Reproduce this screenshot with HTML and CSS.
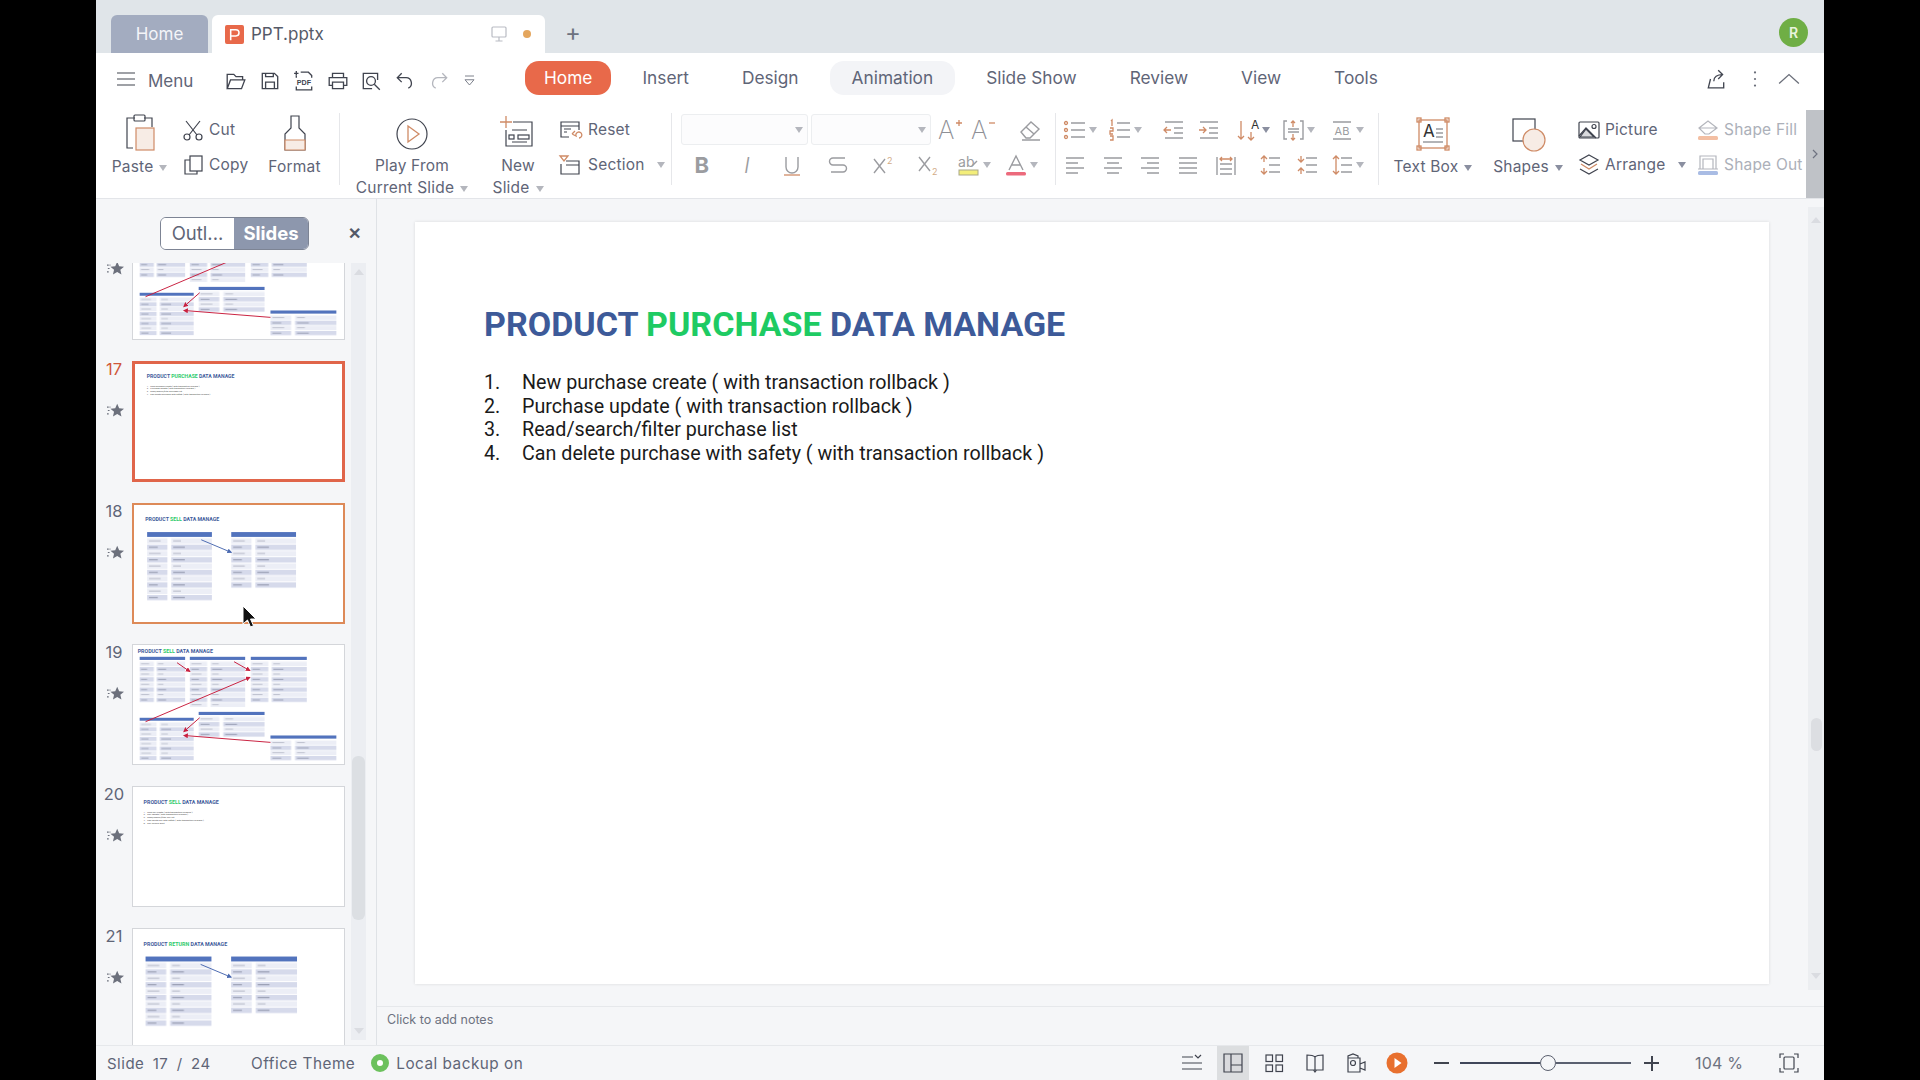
FILE: index.html
```html
<!DOCTYPE html>
<html lang="en">
<head>
  <meta charset="UTF-8" />
  <title>PPT.pptx</title>
  <link rel="stylesheet" href="styles.css">
</head>
<body>
<div class="app">

  <div class="titlebar">
    <div class="tab tab-home">Home</div>
    <div class="tab tab-file">
      <svg class="file-icon" viewBox="0 0 20 20"><rect width="20" height="20" rx="2" fill="#e8694a"/><path d="M6 16V5h5.5a3 3 0 0 1 0 6.500H6" fill="none" stroke="#fff" stroke-width="1.600"/></svg>
      <span>PPT.pptx</span>
      <svg class="ic tab-screen" viewBox="0 0 20 20"><rect x="3" y="3" width="14" height="10" rx="1" class="faint"/><path d="M10 13v4M6.500 17h7" class="faint"/></svg>
      <i class="tab-dot"></i>
    </div>
    <div class="tab-plus">+</div>
    <div class="avatar">R</div>
  </div>

  <div class="menubar">
    <svg class="ic burger" viewBox="0 0 20 20"><path d="M1 4h18M1 10h18M1 16h18"/></svg>
    <span class="menu-label">Menu</span>
    <div class="quick">
      <svg class="ic" viewBox="0 0 20 20"><path d="M2 17V4h6l2 2h6v3M2 17l3-8h13l-3 8z"/></svg>
      <svg class="ic" viewBox="0 0 20 20"><path d="M3 3h11l3 3v11H3zM6 17v-6h8v6M6 3v3h7V3"/></svg>
      <svg class="ic" viewBox="0 0 20 20"><path d="M7 2h7l3 3v2M3 7V5M1 3h4M3 15v3h14v-3"/><path d="M3 1v4"/><text x="10" y="13.500" class="ic-pdf">PDF</text></svg>
      <svg class="ic" viewBox="0 0 20 20"><path d="M5 7V3h10v4M5 14H2V7h16v7h-3M5 11h10v6H5z"/></svg>
      <svg class="ic" viewBox="0 0 20 20"><path d="M16 9V3H3v14h8"/><circle cx="10" cy="10" r="4"/><path d="M13 13l5 5"/></svg>
      <svg class="ic" viewBox="0 0 20 20"><path d="M7 3L3 7l4 4M3 7h8a5 5 0 0 1 2 9.500"/></svg>
      <svg class="ic off" viewBox="0 0 20 20"><path d="M13 3l4 4-4 4M17 7H9a5 5 0 0 0-2 9.500"/></svg>
      <svg class="ic small" viewBox="0 0 20 20"><path d="M4 4h12M4 9h12l-6 7z"/></svg>
    </div>
    <div class="tabs">
      <span class="rtab rtab-on">Home</span>
      <span class="rtab">Insert</span>
      <span class="rtab">Design</span>
      <span class="rtab rtab-hover">Animation</span>
      <span class="rtab">Slide Show</span>
      <span class="rtab">Review</span>
      <span class="rtab">View</span>
      <span class="rtab">Tools</span>
    </div>
    <div class="menu-right">
      <svg class="ic" viewBox="0 0 20 20"><path d="M5 10l-2 8h14v-5M8 12c0-4 3-6 8-6M12 2l4 4-4 4"/></svg>
      <svg class="ic" viewBox="0 0 20 20"><circle cx="10" cy="4" r="1" class="solid"/><circle cx="10" cy="10" r="1" class="solid"/><circle cx="10" cy="16" r="1" class="solid"/></svg>
      <svg class="ic" viewBox="0 0 20 20"><path d="M1 14l9-8 9 8" class="faint-dark"/></svg>
    </div>
  </div>

  <div class="ribbon">
    <div class="big w-paste">
      <svg class="ic lg" viewBox="0 0 36 44"><path d="M22 6h8v9M11 36H5V6h8"/><rect x="12" y="3" width="11" height="6" rx="1"/><rect x="14" y="16" width="18" height="22" class="tint"/></svg>
      <div class="lbl">Paste<i class="caret"></i></div>
    </div>
    <div class="stack w-clip">
      <div class="row">
        <svg class="ic" viewBox="0 0 22 22"><path d="M4 2l11 14M18 2L7 16"/><circle cx="5" cy="18" r="3"/><circle cx="17" cy="18" r="3"/></svg>
        <span>Cut</span>
      </div>
      <div class="row">
        <svg class="ic" viewBox="0 0 22 22"><rect x="8" y="2" width="12" height="15"/><path d="M8 6H3v14h12v-3"/></svg>
        <span>Copy</span>
      </div>
    </div>
    <div class="big w-format">
      <svg class="ic lg" viewBox="0 0 36 44"><path d="M14 4h8v12l6 6v16H8V22l6-6z"/><path d="M8 28h20v10H8z" class="tint"/></svg>
      <div class="lbl">Format</div>
    </div>
    <div class="sep sep-a"></div>
    <div class="big w-play two-line">
      <svg class="ic lg" viewBox="0 0 36 44"><circle cx="18" cy="22" r="15"/><path d="M14 14l11 8-11 8z" class="accent"/></svg>
      <div class="lbl">Play From</div>
      <div class="lbl">Current Slide<i class="caret"></i></div>
    </div>
    <div class="big w-new two-line">
      <svg class="ic lg" viewBox="0 0 36 44"><path d="M13 10h19v24H6V18M12 18h15M12 30h15"/><path d="M6 4v12M0 10h12" class="accent"/><rect x="9" y="23" width="5" height="4"/><rect x="18" y="23" width="11" height="4"/></svg>
      <div class="lbl">New</div>
      <div class="lbl">Slide<i class="caret"></i></div>
    </div>
    <div class="stack w-slide">
      <div class="row row-wide">
        <svg class="ic" viewBox="0 0 22 22"><path d="M10 18H2V3h18v8M2 7h18M5 10h7M5 13h3"/><path d="M13 15l3-3M13 15l4 2a3 3 0 1 1 3 2" class="accent"/></svg>
        <span>Reset</span>
      </div>
      <div class="row row-wide">
        <svg class="ic" viewBox="0 0 22 22"><path d="M7 7h13v13H2V10M7 11h13"/><path d="M1 2h8l-4 5z" class="accent"/></svg>
        <span>Section</span><i class="caret caret-far"></i>
      </div>
    </div>
    <div class="sep sep-b"></div>

    <div class="font-group">
      <div class="font-row1">
        <div class="combo combo-name"><i class="caret"></i></div>
        <div class="combo combo-size"><i class="caret"></i></div>
        <svg class="tool tool-grow" viewBox="0 0 26 22"><text x="0" y="20" class="ic-a">A</text><path d="M18 4h6M21 1v6" class="accent"/></svg>
        <svg class="tool tool-shrink" viewBox="0 0 26 22"><text x="0" y="20" class="ic-a">A</text><path d="M18 4h6" class="accent"/></svg>
        <svg class="tool tool-erase" viewBox="0 0 26 22"><path d="M4 13L14 3l8 7-9 9H9zM9 8l8 7M5 21h18" class="grey"/></svg>
      </div>
      <div class="font-row2">
        <svg class="tool" viewBox="0 0 22 22"><text x="11" y="19" class="ic-b">B</text></svg>
        <svg class="tool" viewBox="0 0 22 22"><text x="11" y="19" class="ic-i">I</text></svg>
        <svg class="tool" viewBox="0 0 22 22"><path d="M5 3v10a6 6 0 0 0 12 0V3" class="grey"/><path d="M3 21h16" class="accent"/></svg>
        <svg class="tool" viewBox="0 0 22 22"><path d="M18 4H6a3.500 3.500 0 0 0 0 7h10a3.500 3.500 0 0 1 0 7H4" class="grey"/></svg>
        <svg class="tool" viewBox="0 0 22 22"><path d="M2 5l11 14M13 5L2 19" class="grey"/><text x="15" y="10" class="ic-sup">2</text></svg>
        <svg class="tool" viewBox="0 0 22 22"><path d="M2 3l11 14M13 3L2 17" class="grey"/><text x="15" y="21" class="ic-sup">2</text></svg>
        <div class="cell">
          <svg class="tool" viewBox="0 0 22 22"><text x="0" y="13" class="ic-ab">ab</text><path d="M14 12l5-5" class="grey"/><rect x="1" y="16" width="19" height="5" fill="#f3ee7a" stroke="#a9a78a"/></svg>
          <i class="caret"></i>
        </div>
        <div class="cell">
          <svg class="tool" viewBox="0 0 22 22"><path d="M4 16L11 2l7 14M7 11h8" class="grey"/><rect x="1" y="18" width="20" height="3.500" rx="1.500" fill="#ec6a7c"/></svg>
          <i class="caret"></i>
        </div>
      </div>
    </div>
    <div class="sep sep-c"></div>

    <div class="para-group">
      <div class="para-row1">
        <div class="cell"><svg class="tool" viewBox="0 0 22 22"><path d="M7 4h14M7 11h14M7 18h14" class="grey"/><circle cx="2" cy="4" r="1.500" class="accent"/><circle cx="2" cy="11" r="1.500" class="accent"/><circle cx="2" cy="18" r="1.500" class="accent"/></svg><i class="caret"></i></div>
        <div class="cell"><svg class="tool" viewBox="0 0 22 22"><path d="M8 4h13M8 11h13M8 18h13" class="grey"/><path d="M2 2l1-1v6M1 9h3v3H1v3h3M1 17h3v4H1" class="accent"/></svg><i class="caret"></i></div>
        <svg class="tool" viewBox="0 0 22 22"><path d="M2 3h18M11 9h9M11 14h9M2 19h18" class="grey"/><path d="M8 11H1M4 8l-3 3 3 3" class="accent"/></svg>
        <svg class="tool" viewBox="0 0 22 22"><path d="M2 3h18M11 9h9M11 14h9M2 19h18" class="grey"/><path d="M1 11h7M5 8l3 3-3 3" class="accent"/></svg>
        <div class="cell"><svg class="tool" viewBox="0 0 22 22"><path d="M4 2v18M1 17l3 3 3-3M14 13v8M11 18l3 3 3-3" class="accent"/><text x="14" y="10" class="ic-small">A</text></svg><i class="caret caret-dark"></i></div>
        <div class="cell"><svg class="tool" viewBox="0 0 22 22"><path d="M5 2H2v18h3M18 2h3v18h-3M6 10h11M6 13h11" class="grey"/><path d="M11 2v6M9 4l2-2 2 2M11 15v6M9 19l2 2 2-2" class="accent"/></svg><i class="caret"></i></div>
        <div class="cell"><svg class="tool" viewBox="0 0 22 22"><path d="M2 3h18M2 20h18" class="grey"/><text x="11" y="16" class="ic-ab2">AB</text></svg><i class="caret"></i></div>
      </div>
      <div class="para-row2">
        <svg class="tool" viewBox="0 0 22 22"><path d="M2 4h18M2 9h12M2 14h18M2 19h12" class="grey"/></svg>
        <svg class="tool" viewBox="0 0 22 22"><path d="M2 4h18M5 9h12M2 14h18M5 19h12" class="grey"/></svg>
        <svg class="tool" viewBox="0 0 22 22"><path d="M2 4h18M8 9h12M2 14h18M8 19h12" class="grey"/></svg>
        <svg class="tool" viewBox="0 0 22 22"><path d="M2 4h18M2 9h18M2 14h18M2 19h18" class="grey"/></svg>
        <svg class="tool" viewBox="0 0 22 22"><path d="M2 3v18M20 3v18M5 10h12M5 15h12M5 20h12" class="grey"/><path d="M5 5h12M7 3L5 5l2 2M15 3l2 2-2 2" class="accent"/></svg>
        <svg class="tool" viewBox="0 0 22 22"><path d="M10 4h11M10 11h11M10 18h11" class="grey"/><path d="M5 2v6M2 5l3-3 3 3M5 14v6M2 17l3 3 3-3" class="accent"/></svg>
        <svg class="tool" viewBox="0 0 22 22"><path d="M10 4h11M10 11h11M10 18h11" class="grey"/><path d="M5 2v6M2 5l3 3 3-3M5 14v6M2 17l3-3 3 3" class="accent"/></svg>
        <div class="cell"><svg class="tool" viewBox="0 0 22 22"><path d="M10 4h11M10 11h11M10 18h11" class="grey"/><path d="M5 2v18M2 5l3-3 3 3M2 17l3 3 3-3" class="accent"/></svg><i class="caret"></i></div>
      </div>
    </div>
    <div class="sep sep-d"></div>

    <div class="big w-textbox">
      <svg class="ic lg" viewBox="0 0 36 44"><rect x="4" y="8" width="28" height="28" class="accent"/><rect x="2" y="6" width="4" height="4" class="accent"/><rect x="30" y="6" width="4" height="4" class="accent"/><rect x="2" y="34" width="4" height="4" class="accent"/><rect x="30" y="34" width="4" height="4" class="accent"/><text x="8" y="25" class="ic-tb">A</text><path d="M21 17h7M21 21h7M21 25h7M8 30h20" class="grey"/></svg>
      <div class="lbl">Text Box<i class="caret caret-dark"></i></div>
    </div>
    <div class="big w-shapes">
      <svg class="ic lg" viewBox="0 0 36 44"><rect x="3" y="7" width="22" height="22"/><circle cx="24" cy="28" r="11" class="tint"/></svg>
      <div class="lbl">Shapes<i class="caret caret-dark"></i></div>
    </div>
    <div class="stack w-arrange">
      <div class="row">
        <svg class="ic" viewBox="0 0 22 22"><rect x="1" y="3" width="20" height="16" rx="1"/><circle cx="16" cy="7.500" r="2"/><path d="M1 17l7-8 10 10"/><path d="M2 18l6-8 8 8z" class="fill-grey"/></svg>
        <span>Picture</span>
      </div>
      <div class="row">
        <svg class="ic" viewBox="0 0 22 22"><path d="M11 1l9 5-9 5-9-5zM2 15l9 5 9-5"/><path d="M3 10l8 5 8-5" class="accent"/></svg>
        <span>Arrange</span><i class="caret caret-dark caret-arrange"></i>
      </div>
    </div>
    <div class="stack w-fill">
      <div class="row row-off">
        <svg class="ic off" viewBox="0 0 22 22"><path d="M2 9l9-7 9 7-8 6H8zM2 9h18"/><rect x="1" y="17" width="20" height="4" rx="1.500" fill="#f3bfa3" stroke="none"/></svg>
        <span>Shape Fill</span>
      </div>
      <div class="row row-off">
        <svg class="ic off" viewBox="0 0 22 22"><path d="M3 15V2h16v13M6 15V5h10v10M1 15h20"/><rect x="1" y="17" width="20" height="4" rx="1.500" fill="#a9bce4" stroke="none"/></svg>
        <span>Shape Out</span>
      </div>
    </div>
    <div class="expander"><svg viewBox="0 0 8 12"><path d="M2 2l4 4-4 4" fill="none" stroke="#6e7280" stroke-width="1.200"/></svg></div>
  </div>

  <div class="workspace">
    <aside class="side">
      <div class="side-head">
        <div class="switch">
          <span class="switch-a">Outl...</span>
          <span class="switch-b">Slides</span>
        </div>
        <span class="side-close">&#10005;</span>
      </div>
      <div class="side-body">
        <div class="thumbs">

          <div class="thumb-row">
            <div class="thumb-side"><span class="num"></span><svg class="star" viewBox="0 0 20 20"><use href="#star"/></svg></div>
            <div class="thumb">
              <svg viewBox="0 0 213 121">
                <defs>
                  <pattern id="rows" width="67" height="13" patternUnits="userSpaceOnUse">
                    <rect width="21" height="5.500" fill="#d6daeb"/><rect x="25" width="42" height="5.500" fill="#d6daeb"/>
                    <rect y="6.500" width="21" height="5.500" fill="#eceef6"/><rect x="25" y="6.500" width="42" height="5.500" fill="#eceef6"/>
                    <rect x="2" y="2.200" width="9" height="1" fill="#9096aa"/><rect x="27" y="2.200" width="12" height="1" fill="#8a90a6"/>
                    <rect x="2" y="8.700" width="12" height=".8" fill="#a6aaba"/><rect x="27" y="8.700" width="8" height=".8" fill="#a6aaba"/>
                  </pattern>
                  <marker id="red" markerWidth="5" markerHeight="5" refX="4" refY="2.500" orient="auto"><path d="M0 0l5 2.500-5 2.500z" fill="#c9203f"/></marker>
                  <marker id="blue" markerWidth="5" markerHeight="5" refX="4" refY="2.500" orient="auto"><path d="M0 0l5 2.500-5 2.500z" fill="#4a69b0"/></marker>
                  <symbol id="star" viewBox="0 0 20 20">
                    <path d="M12 2l2.300 5.300 5.700.500-4.300 3.800 1.300 5.600-5-3-5 3 1.300-5.600L4 7.800l5.700-.5z" fill="#6c707c"/>
                    <path d="M0 6h4M1 10h3M0 14h3" stroke="#6c707c" stroke-width="1.300" stroke-dasharray="2 1"/>
                  </symbol>
                  <symbol id="two" viewBox="0 0 213 121">
                    <g transform="translate(12 28)"><rect width="67" height="5" fill="#5273bd"/><rect y="6" width="67" height="65" fill="url(#rows)"/></g>
                    <g transform="translate(99 28)"><rect width="67" height="5" fill="#5273bd"/><rect y="6" width="67" height="52" fill="url(#rows)"/></g>
                    <path d="M68 36l31 13" stroke="#4a69b0" stroke-width="1" marker-end="url(#blue)"/>
                  </symbol>
                  <symbol id="six" viewBox="0 0 213 121">
                    <g transform="translate(6 12) scale(.69 .8)"><rect width="67" height="4" fill="#5273bd"/><rect y="6" width="67" height="52" fill="url(#rows)"/></g>
                    <g transform="translate(57 12) scale(.84 .8)"><rect width="67" height="4" fill="#5273bd"/><rect y="6" width="67" height="58" fill="url(#rows)"/></g>
                    <g transform="translate(119 12) scale(.85 .8)"><rect width="67" height="4" fill="#5273bd"/><rect y="6" width="67" height="52" fill="url(#rows)"/></g>
                    <g transform="translate(6 74) scale(.82 .75)"><rect width="67" height="4" fill="#5273bd"/><rect y="6" width="67" height="52" fill="url(#rows)"/></g>
                    <g transform="translate(66 68) scale(1 .8)"><rect width="67" height="4" fill="#5273bd"/><rect y="6" width="67" height="26" fill="url(#rows)"/></g>
                    <g transform="translate(139 92) scale(1 .8)"><rect width="67" height="4" fill="#5273bd"/><rect y="6" width="67" height="26" fill="url(#rows)"/></g>
                    <g stroke="#c9203f" stroke-width="1">
                      <path d="M44 18l13 9" marker-end="url(#red)"/>
                      <path d="M102 17l16 9" marker-end="url(#red)"/>
                      <path d="M12 78l106-45" marker-end="url(#red)"/>
                      <path d="M67 74L51 88" marker-end="url(#red)"/>
                      <path d="M139 99l-88-7" marker-end="url(#red)"/>
                    </g>
                  </symbol>
                </defs>
                <use href="#six" width="213" height="121"/>
              </svg>
            </div>
          </div>

          <div class="thumb-row">
            <div class="thumb-side"><span class="num num-on">17</span><svg class="star" viewBox="0 0 20 20"><use href="#star"/></svg></div>
            <div class="thumb thumb-on">
              <svg viewBox="0 0 213 121">
                <text x="10" y="15" class="t-title">PRODUCT <tspan class="t-green">PURCHASE</tspan> DATA MANAGE</text>
                <text x="10" y="24" class="t-line">1.   New purchase create ( with transaction rollback )</text>
                <text x="10" y="26.800" class="t-line">2.   Purchase update ( with transaction rollback )</text>
                <text x="10" y="29.600" class="t-line">3.   Read/search/filter purchase list</text>
                <text x="10" y="32.400" class="t-line">4.   Can delete purchase with safety ( with transaction rollback )</text>
              </svg>
            </div>
          </div>

          <div class="thumb-row">
            <div class="thumb-side"><span class="num">18</span><svg class="star" viewBox="0 0 20 20"><use href="#star"/></svg></div>
            <div class="thumb thumb-near">
              <svg viewBox="0 0 213 121">
                <text x="10" y="17" class="t-title">PRODUCT <tspan class="t-green">SELL</tspan> DATA MANAGE</text>
                <use href="#two" width="213" height="121"/>
              </svg>
            </div>
          </div>

          <div class="thumb-row">
            <div class="thumb-side"><span class="num">19</span><svg class="star" viewBox="0 0 20 20"><use href="#star"/></svg></div>
            <div class="thumb">
              <svg viewBox="0 0 213 121">
                <text x="4" y="8" class="t-title">PRODUCT <tspan class="t-green">SELL</tspan> DATA MANAGE</text>
                <use href="#six" width="213" height="121"/>
              </svg>
            </div>
          </div>

          <div class="thumb-row">
            <div class="thumb-side"><span class="num">20</span><svg class="star" viewBox="0 0 20 20"><use href="#star"/></svg></div>
            <div class="thumb">
              <svg viewBox="0 0 213 121">
                <text x="10" y="17" class="t-title">PRODUCT <tspan class="t-green">SELL</tspan> DATA MANAGE</text>
                <text x="10" y="26" class="t-line">1.   New sell create ( with transaction rollback )</text>
                <text x="10" y="28.800" class="t-line">2.   Sell update ( with transaction rollback )</text>
                <text x="10" y="31.600" class="t-line">3.   Read/search/filter sell list</text>
                <text x="10" y="34.400" class="t-line">4.   Can delete sell with safety ( with transaction rollback )</text>
                <text x="10" y="37.200" class="t-line">5.   Sell invoice print</text>
              </svg>
            </div>
          </div>

          <div class="thumb-row">
            <div class="thumb-side"><span class="num">21</span><svg class="star" viewBox="0 0 20 20"><use href="#star"/></svg></div>
            <div class="thumb">
              <svg viewBox="0 0 213 121">
                <text x="10" y="17" class="t-title">PRODUCT <tspan class="t-green">RETURN</tspan> DATA MANAGE</text>
                <use href="#two" width="213" height="121"/>
              </svg>
            </div>
          </div>

        </div>
        <div class="side-scroll">
          <i class="arrow-up"></i>
          <div class="side-knob"></div>
          <i class="arrow-down"></i>
        </div>
      </div>
    </aside>

    <main class="main">
      <div class="canvas">
        <div class="slide">
          <h1 class="slide-title">PRODUCT <span class="green">PURCHASE</span> DATA MANAGE</h1>
          <ol class="slide-list">
            <li><span>1.</span>New purchase create ( with transaction rollback )</li>
            <li><span>2.</span>Purchase update ( with transaction rollback )</li>
            <li><span>3.</span>Read/search/filter purchase list</li>
            <li><span>4.</span>Can delete purchase with safety ( with transaction rollback )</li>
          </ol>
        </div>
        <div class="main-scroll">
          <i class="arrow-up"></i>
          <div class="main-knob"></div>
          <i class="arrow-down"></i>
        </div>
      </div>
      <div class="notes">Click to add notes</div>
    </main>
  </div>

  <div class="status">
    <span class="st-slide">Slide 17 / 24</span>
    <span class="st-theme">Office Theme</span>
    <i class="st-dot"></i>
    <span class="st-backup">Local backup on</span>
    <div class="st-right">
      <div class="st-cell"><svg class="ic" viewBox="0 0 22 22"><path d="M1 5h11M1 11h20M1 17h20M14 3l3 3 3-3"/></svg></div>
      <div class="st-cell"><span class="st-active"><svg class="ic" viewBox="0 0 22 22"><path d="M2 2h18v18H2zM9 2v18M9 13h11" class="fill-grey"/></svg></span></div>
      <div class="st-cell"><svg class="ic" viewBox="0 0 22 22"><rect x="3" y="3" width="6.500" height="6.500"/><rect x="13" y="3" width="6.500" height="6.500"/><rect x="3" y="13" width="6.500" height="6.500"/><rect x="13" y="13" width="6.500" height="6.500"/></svg></div>
      <div class="st-cell"><svg class="ic" viewBox="0 0 22 22"><path d="M11 5c-2-2-5-2-8-2v15h8V5c2-2 5-2 8-2v15h-8M9.500 18l1.500 2 1.500-2"/></svg></div>
      <div class="st-cell"><svg class="ic" viewBox="0 0 22 22"><path d="M3 6V4l5-2 5 2v2M3 6v14h12V6zM15 12l5-2v8l-5-2"/><circle cx="8" cy="11" r="2.500"/></svg></div>
      <div class="st-cell"><svg class="st-play" viewBox="0 0 22 22"><circle cx="11" cy="11" r="10.500" fill="#e8702f"/><path d="M8.500 6l7 5-7 5z" fill="#fff"/></svg></div>
      <div class="st-zoom-btn st-minus"><b></b></div>
      <div class="slider"><i class="slider-a"></i><i class="slider-knob"></i><i class="slider-b"></i></div>
      <div class="st-zoom-btn"><b></b><b class="vert"></b></div>
      <span class="st-pct">104 %</span>
      <svg class="ic st-fit" viewBox="0 0 22 22"><path d="M2 6V2h4M16 2h4v4M2 16v4h4M16 20h4v-4"/><rect x="6" y="5" width="10" height="12" rx="1"/></svg>
    </div>
  </div>

  <svg class="cursor" viewBox="0 0 16 24"><path d="M2 1v18l4.500-4 3 7 3-1.300-3-6.700H15z" fill="#111" stroke="#fff" stroke-width="1"/></svg>
</div>
</body>
</html>
```

FILE: styles.css
```css
html, body {
  margin: 0; padding: 0; height: 100%; background: black;
  font-family: Inter, "Noto Sans", sans-serif;
  overflow: hidden;
}
.app {
  position: relative;
  width: 1728px;
  height: 1080px;
  margin-left: 96px;
  display: flex;
  flex-direction: column;
  background: #f5f6f8;
  color: #5f6577;
  overflow: hidden;
}

/* icons */
.ic { width: 22px; height: 22px; flex: none; fill: none; stroke: #40444f; stroke-width: 1.200; overflow: visible; }
.ic.off, .ic.off path { stroke: #b4b6bd; }
.ic.small { width: 15px; height: 15px; stroke: #6f7480; }
.ic.lg { width: 36px; height: 44px; }
.ic .faint { stroke: #b9bcc4; fill: none; }
.ic .faint-dark { stroke: #6b6f7a; }
.ic .solid { fill: #6b6f7a; stroke: none; }
.tool { width: 22px; height: 22px; flex: none; fill: none; overflow: visible; }
.tint { fill: #f7ece5; stroke: #cf8b66; }
.accent { fill: none; stroke: #cf8b66; stroke-width: 1.300; }
.grey { fill: none; stroke: #9b9ca0; stroke-width: 1.400; }
.fill-grey { fill: #d9dadd; stroke: #40444f; }
.ic-pdf { font: 700 6.500px "Liberation Sans", sans-serif; fill: #40444f; stroke: none; text-anchor: middle; }
.ic-a { font: 200 25px Inter, sans-serif; fill: #8f9096; }
.ic-b { font: 700 22px Inter, sans-serif; fill: #9b9ca0; text-anchor: middle; }
.ic-i { font: italic 300 22px Inter, sans-serif; fill: #9b9ca0; text-anchor: middle; }
.ic-sup { font: 400 9px Inter, sans-serif; fill: #d2ab87; }
.ic-ab { font: 400 14px Inter, sans-serif; fill: #9b9ca0; }
.ic-small { font: 400 12px Inter, sans-serif; fill: #333; }
.ic-ab2 { font: 400 11px Inter, sans-serif; fill: #9b9ca0; text-anchor: middle; }
.ic-tb { font: 400 17px Inter, sans-serif; fill: #333; stroke: none; }
.caret {
  display: inline-block;
  width: 0; height: 0;
  margin-left: 6px;
  border-left: 4px solid transparent;
  border-right: 4px solid transparent;
  border-top: 6px solid #b4b6bd;
  vertical-align: middle;
}
.caret-dark { border-top-color: #8a8fa0; }

/* title bar */
.titlebar {
  height: 53px;
  flex: none;
  display: flex;
  align-items: flex-end;
  padding-left: 15px;
  background: #e0e5e9;
}
.tab {
  height: 38px;
  border-radius: 6px 6px 0 0;
  font-size: 17px;
  display: flex;
  align-items: center;
}
.tab-home { width: 97px; justify-content: center; background: #a3acc0; color: #f4f5f8; }
.tab-file { width: 333px; margin-left: 4px; padding-left: 13px; box-sizing: border-box; background: #fff; color: #555a68; }
.file-icon { width: 19px; height: 19px; margin-right: 7px; }
.tab-screen { width: 20px; height: 20px; margin-left: 165px; }
.tab-dot { width: 8px; height: 8px; margin-left: 14px; border-radius: 50%; background: #e4a65e; }
.tab-plus { width: 56px; height: 40px; text-align: center; font-size: 24px; line-height: 40px; color: #6d7280; }
.avatar {
  width: 29px; height: 29px;
  margin: 0 16px 6px auto;
  border-radius: 50%;
  background: #6fae45;
  color: #e8f4dc;
  font-size: 14px;
  font-weight: 600;
  text-align: center;
  line-height: 29px;
}

/* menu row */
.menubar {
  height: 52px;
  flex: none;
  display: flex;
  align-items: center;
  background: #fff;
  font-size: 17.300px;
}
.burger { width: 20px; height: 20px; margin-left: 20px; }
.menu-label { margin-left: 12px; width: 45px; margin-top: 3px; font-size: 17px; }
.quick { display: flex; align-items: center; justify-content: space-between; width: 252px; margin-left: 32px; margin-top: 3px; }
.tabs { display: flex; align-items: center; gap: 9px; margin-left: 48px; margin-top: -3px; }
.rtab { height: 34px; padding: 0 22px; line-height: 34px; border-radius: 14px; white-space: nowrap; }
.rtab-on { padding: 0 19px; background: #e8694a; color: #fff; }
.rtab-hover { background: #f3f4f7; }
.menu-right { display: flex; align-items: center; gap: 17px; margin-left: auto; margin-right: 24px; }
.menu-right svg:last-child { margin-left: -5px; }

/* ribbon */
.ribbon {
  height: 94px;
  flex: none;
  box-sizing: border-box;
  display: flex;
  padding: 7px 0 0 15px;
  background: #fff;
  border-bottom: 1px solid #e3e5e9;
  font-size: 15.500px;
  letter-spacing: .2px;
  position: relative;
}
.big { display: flex; flex-direction: column; align-items: center; flex: none; white-space: nowrap; }
.two-line .ic { margin-bottom: -1px; }
.lbl { height: 22px; line-height: 22px; }
.stack { display: flex; flex-direction: column; flex: none; white-space: nowrap; }
.row { height: 35px; display: flex; align-items: center; gap: 5px; }
.row-wide { gap: 7px; }
.row-off { color: #acb0b9; }
.caret-far { margin-left: 5px; }
.caret-arrange { margin-left: 8px; }
.sep { width: 1px; height: 72px; flex: none; margin-top: 1px; background: #e6e7ea; }
.w-paste { width: 57px; }
.w-clip { width: 72px; margin-left: 14px; }
.w-format { width: 53px; margin-left: 14px; }
.sep-a { margin-left: 18px; }
.w-play { width: 114px; margin-left: 15px; }
.w-new { width: 50px; margin-left: 24px; }
.w-slide { width: 104px; margin-left: 16px; }
.sep-b { margin-left: 8px; }
.font-group { width: 368px; margin-left: 8px; flex: none; }
.font-row1 { height: 35px; display: flex; align-items: center; }
.combo {
  height: 31px;
  box-sizing: border-box;
  display: flex;
  align-items: center;
  justify-content: flex-end;
  padding-right: 4px;
  border: 1px solid #eceef0;
  border-radius: 3px;
  background: #fcfcfd;
}
.combo-name { width: 127px; margin-left: 1px; }
.combo-size { width: 120px; margin-left: 3px; }
.tool-grow { width: 26px; margin-left: 7px; }
.tool-shrink { width: 26px; margin-left: 7px; }
.tool-erase { width: 26px; margin-left: 20px; }
.font-row2 {
  height: 35px;
  display: grid;
  grid-template-columns: 45px 45px 46px 45px 45px 41px 47px auto;
  align-items: center;
  padding-left: 11px;
}
.cell { display: flex; align-items: center; }
.cell .caret { margin-left: 3px; }
.sep-c { margin-left: 7px; }
.para-group { width: 306px; margin-left: 8px; flex: none; }
.para-row1 {
  height: 35px;
  display: grid;
  grid-template-columns: 45px 54px 35px 39px 45px 49px 39px;
  align-items: center;
}
.para-row2 {
  height: 35px;
  display: grid;
  grid-template-columns: 38px 37px 38px 38px 44px 37px 35px 39px;
  align-items: center;
}
.sep-d { margin-left: 8px; }
.w-textbox { width: 82px; margin-left: 13px; }
.w-shapes { width: 70px; margin-left: 19px; }
.w-arrange { width: 110px; margin-left: 15px; }
.w-fill { width: 109px; margin-left: 9px; overflow: hidden; }
.expander {
  position: absolute;
  right: 0; top: 5px; bottom: 0;
  width: 18px;
  display: flex;
  align-items: center;
  justify-content: center;
  background: #bfc2c7;
}
.expander svg { width: 8px; height: 12px; }

/* workspace */
.workspace { flex: 1; min-height: 0; display: flex; }
.side {
  width: 281px;
  flex: none;
  display: flex;
  flex-direction: column;
  border-right: 1px solid #dfe2e6;
  box-sizing: border-box;
}
.side-head { height: 64px; flex: none; display: flex; align-items: center; padding-left: 64px; box-sizing: border-box; }
.switch {
  display: flex;
  width: 149px;
  height: 33px;
  margin-top: 4px;
  box-sizing: border-box;
  border: 1px solid #7d8494;
  border-radius: 6px;
  overflow: hidden;
  font-size: 18.500px;
  line-height: 31px;
  text-align: center;
}
.switch-a { width: 73px; background: #fff; color: #5f6577; }
.switch-b { flex: 1; background: #8d97ad; color: #fff; font-weight: 700; }
.side-close { margin-left: 39px; margin-top: 4px; font-size: 16px; font-weight: 700; color: #555a68; }
.side-body { flex: 1; min-height: 0; display: flex; padding-bottom: 5px; overflow: hidden; }
.thumbs { width: 249px; margin-top: -44px; flex: none; margin-right: 6px; }
.thumb-row { display: flex; height: 121px; margin-bottom: 20.800px; }
.thumb-side { width: 36px; flex: none; display: flex; flex-direction: column; align-items: center; }
.num { height: 24px; margin-top: -4px; font-size: 16.500px; line-height: 24px; color: #5f6577; }
.num-on { color: #d0573a; }
.star { width: 17px; height: 17px; margin-top: 21px; margin-left: 2px; }
.thumb {
  width: 213px;
  height: 121px;
  flex: none;
  box-sizing: border-box;
  background: #fff;
  border: 1px solid #d4d6da;
}
.thumb svg { display: block; width: 100%; height: 100%; }
.thumb-on { border: 3px solid #e0654a; }
.thumb-near { border: 2px solid #dd8a58; }
.t-title { font: 700 5.400px Roboto, sans-serif; fill: #3f5c9b; }
.t-green { fill: #2ecb6b; }
.t-line { font: 400 2.400px Roboto, sans-serif; fill: #444; white-space: pre; }
.side-scroll {
  width: 15px;
  flex: none;
  display: flex;
  flex-direction: column;
  align-items: center;
  justify-content: space-between;
  padding: 6px 0;
  box-sizing: border-box;
  background: #eceef2;
  position: relative;
}
.side-knob { width: 13px; height: 164px; margin-top: 451px; margin-bottom: 79px; border-radius: 6px; background: #dcdfe3; }
.arrow-up, .arrow-down {
  width: 0; height: 0;
  border-left: 5px solid transparent;
  border-right: 5px solid transparent;
}
.arrow-up { border-bottom: 6px solid #dadce1; }
.arrow-down { border-top: 6px solid #dadce1; }

.main { flex: 1; min-width: 0; display: flex; flex-direction: column; }
.canvas { flex: 1; min-height: 0; display: flex; padding: 23px 0 0 38px; }
.slide {
  width: 1354px;
  height: 762px;
  flex: none;
  box-sizing: border-box;
  padding: 82px 0 0 69px;
  background: #fff;
  box-shadow: 0 0 3px rgba(0,0,0,.12);
  font-family: Roboto, sans-serif;
}
.slide-title { margin: 0; font-size: 34px; line-height: 40px; font-weight: 700; color: #3d5a99; }
.green { color: #1ecb63; }
.slide-list { margin: 27px 0 0; padding: 0; list-style: none; font-size: 19.700px; line-height: 23.500px; color: #1a1a1a; }
.slide-list li { display: flex; }
.slide-list span { width: 38px; }
.main-scroll {
  width: 16px;
  height: 783px;
  margin: -15px 0 0 auto;
  padding-top: 10px;
  box-sizing: border-box;
  display: flex;
  flex-direction: column;
  align-items: center;
  background: #eceef1;
}
.main-knob { width: 11px; height: 33px; border-radius: 6px; background: #dcdee2; margin-top: 495px; margin-bottom: 222px; }
.notes {
  height: 39px;
  flex: none;
  box-sizing: border-box;
  padding-left: 10px;
  border-top: 1px solid #e6e8eb;
  font-size: 12.500px;
  line-height: 26px;
  color: #6d7280;
}

/* status bar */
.status {
  height: 35px;
  flex: none;
  box-sizing: border-box;
  display: flex;
  align-items: center;
  padding-left: 11px;
  border-top: 1px solid #e6e8eb;
  font-size: 15px;
  letter-spacing: .5px;
}
.st-slide { width: 144px; word-spacing: 3.700px; white-space: nowrap; }
.st-theme { font-size: 15.300px; }
.st-dot { width: 6px; height: 6px; margin: 0 7px 0 16px; border-radius: 50%; background: #fff; border: 6px solid #6cc15d; }
.st-backup { font-size: 15.300px; }
.st-right { width: 629px; margin-left: auto; margin-right: 24px; display: flex; align-items: center; }
.st-cell { width: 41px; display: flex; justify-content: center; align-items: center; }
.st-active { width: 32px; height: 34px; display: flex; align-items: center; justify-content: center; background: #dcdee0; }
.st-play { width: 22px; height: 22px; }
.st-zoom-btn { width: 41px; height: 20px; position: relative; }
.st-zoom-btn b { position: absolute; left: 13px; top: 9px; width: 15px; height: 2px; background: #40444f; }
.st-zoom-btn b.vert { left: 19.500px; top: 2.500px; width: 2px; height: 15px; }
.st-minus { width: 43px; }
.st-minus b { left: 17px; }
.slider { width: 171px; display: flex; align-items: center; }
.slider-a { width: 80px; height: 2px; background: #40465a; }
.slider-knob { width: 16px; height: 16px; box-sizing: border-box; border: 1px solid #5a5f6e; border-radius: 50%; background: #f5f6f8; }
.slider-b { flex: 1; height: 2px; background: #5a6070; }
.st-pct { margin-left: 23px; font-size: 16px; color: #6d7280; letter-spacing: .2px; white-space: nowrap; }
.st-fit { margin-left: auto; }

.cursor { position: absolute; left: 145px; top: 605px; width: 16px; height: 24px; z-index: 5; }
```
